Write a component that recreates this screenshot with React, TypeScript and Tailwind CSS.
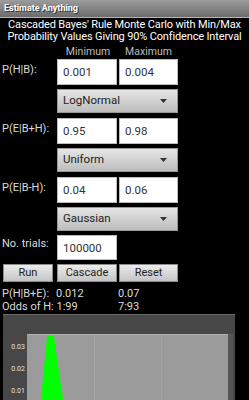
const font = { fontFamily: 'Roboto, "Noto Sans", sans-serif' }

function NumBox({ value, w = 'w-[60px]' }: { value: string; w?: string }) {
  return (
    <div
      className={`${w} h-[26px] bg-white border border-[#bdbdbd] flex items-center pl-[5px] pt-[1px] text-[11.5px] text-[#333]`}
    >
      {value}
    </div>
  )
}

function Picker({ value }: { value: string }) {
  return (
    <div className="w-[121px] h-[24px] ml-[57px] flex items-center justify-between pl-[5px] pr-[10px] bg-gradient-to-b from-[#e6e6e6] to-[#bdbdbd] border border-[#9a9a9a] text-[11.5px] text-[#222]">
      <span>{value}</span>
      <svg width="7" height="4" viewBox="0 0 7 4">
        <path d="M0 0 L7 0 L3.5 4 Z" fill="#333" />
      </svg>
    </div>
  )
}

function Row({ label, min, max }: { label: string; min: string; max: string }) {
  return (
    <div className="flex items-center h-[26px]">
      <div className="w-[57px] pl-[2px] text-[11px] text-[#dcdcdc] -mt-[4px] whitespace-nowrap">{label}</div>
      <NumBox value={min} />
      <div className="w-[2px]" />
      <NumBox value={max} w="w-[59px]" />
    </div>
  )
}

function Btn({ label, w }: { label: string; w: string }) {
  return (
    <div
      className={`${w} h-[18px] flex items-center justify-center bg-gradient-to-b from-[#ececec] to-[#c4c4c4] border border-[#8d8d8d] text-[11px] text-[#222]`}
    >
      {label}
    </div>
  )
}

export default function App() {
  return (
    <div className="w-[249px] h-[400px] bg-black overflow-hidden" style={font}>
      <div className="h-[18px] bg-gradient-to-b from-[#9c9c9c] to-[#6c6c6c] border-b border-[#b5b5b5] flex items-center pl-[4px]">
        <span className="text-[9px] font-bold text-white [text-shadow:1px_1px_0_#333]">
          Estimate Anything
        </span>
      </div>

      <div className="text-center text-white text-[11px] leading-[12px] mt-[1px] whitespace-nowrap tracking-[-0.15px]">
        <div>Cascaded Bayes' Rule Monte Carlo with Min/Max</div>
        <div>Probability Values Giving 90% Confidence Interval</div>
      </div>

      <div className="flex h-[15px] items-center text-[10.5px] text-[#bdbdbd] mt-[1px]">
        <div className="w-[57px]" />
        <div className="w-[62px] text-center">Minimum</div>
        <div className="w-[59px] text-center">Maximum</div>
      </div>

      <Row label="P(H|B):" min="0.001" max="0.004" />
      <div className="mt-[4px]">
        <Picker value="LogNormal" />
      </div>
      <div className="mt-[5px]">
        <Row label="P(E|B+H):" min="0.95" max="0.98" />
      </div>
      <div className="mt-[4px]">
        <Picker value="Uniform" />
      </div>
      <div className="mt-[5px]">
        <Row label="P(E|B-H):" min="0.04" max="0.06" />
      </div>
      <div className="mt-[4px]">
        <Picker value="Gaussian" />
      </div>

      <div className="flex items-center h-[25px] mt-[4px]">
        <div className="w-[57px] pl-[2px] text-[11px] text-[#dcdcdc] -mt-[6px]">No. trials:</div>
        <div className="w-[60px] h-[25px] bg-white border border-[#bdbdbd] flex items-center pl-[5px] pt-[3px] text-[11.5px] text-[#333]">
          100000
        </div>
      </div>

      <div className="flex mt-[4px] pl-[3px] gap-[4px]">
        <Btn label="Run" w="w-[50px]" />
        <div className="flex gap-[2px]">
          <Btn label="Cascade" w="w-[60px]" />
          <Btn label="Reset" w="w-[59px]" />
        </div>
      </div>

      <div className="text-[11px] text-[#dcdcdc] leading-[13px] mt-[5px]">
        <div className="flex">
          <div className="w-[56px] pl-[2px]">P(H|B+E):</div>
          <div className="w-[62px]">0.012</div>
          <div>0.07</div>
        </div>
        <div className="flex">
          <div className="w-[118px] pl-[2px]">Odds of H: 1:99</div>
          <div>7:93</div>
        </div>
      </div>

      <div className="ml-[3px] mt-[1px] w-[232px] h-[100px] bg-[#474747] border-t border-[#6a6a6a] flex flex-col">
        <div className="h-[19px]" />
        <div className="flex flex-1">
          <div className="w-[24px] flex flex-col items-end pr-[2px] pt-[9px] gap-[14px] text-[7px] leading-[8px] text-[#e0e0e0]">
            <span>0.03</span>
            <span>0.02</span>
            <span>0.01</span>
          </div>
          <div className="relative w-[201px] bg-[#9b9b9b] border-t border-[#b0b0b0]">
            <div className="absolute top-0 bottom-0 left-[67px] w-px bg-[#a6a6a6]" />
            <div className="absolute top-0 bottom-0 left-[134px] w-px bg-[#a4a4a4]" />
            <svg className="absolute left-0 top-0" width="60" height="70" viewBox="0 0 60 70">
              <path d="M13 70 C16 45 18 20 20 1 L27 1 C30 25 34 50 37 70 Z" fill="#00ff00" />
              <path d="M11 70 C14 45 16 20 19 1" stroke="#b08fc0" strokeWidth="1" fill="none" opacity="0.6" />
            </svg>
          </div>
          <div className="w-[5px] bg-[#555]" />
        </div>
      </div>
    </div>
  )
}
